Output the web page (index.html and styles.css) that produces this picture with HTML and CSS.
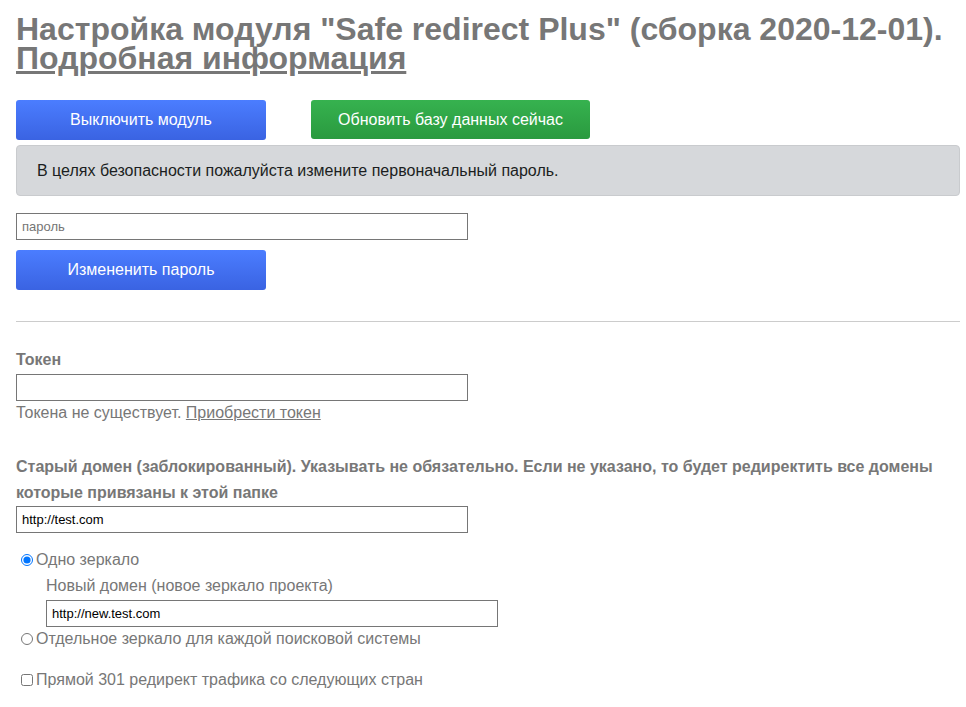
FILE: index.html
```html
<!DOCTYPE html>
<html lang="ru">
<head>
<meta charset="utf-8">
<title>Safe redirect Plus</title>
<link rel="stylesheet" href="styles.css">
</head>
<body>
<div class="page">
  <h1 class="title">Настройка модуля "Safe redirect Plus" (сборка 2020-12-01). <a href="#" class="title-link">Подробная информация</a></h1>

  <div class="actions">
    <button class="btn btn-blue">Выключить модуль</button>
    <button class="btn btn-green">Обновить базу данных сейчас</button>
  </div>

  <div class="alert">В целях безопасности пожалуйста измените первоначальный пароль.</div>

  <div class="pass-block">
    <input class="field field-pass" type="text" placeholder="пароль">
    <button class="btn btn-blue">Измененить пароль</button>
  </div>

  <hr class="divider">

  <div class="group">
    <label class="label">Токен</label>
    <input class="field" type="text">
    <div class="hint">Токена не существует. <a href="#" class="hint-link">Приобрести токен</a></div>
  </div>

  <div class="group group-domain">
    <label class="label label-wide">Старый домен (заблокированный). Указывать не обязательно. Если не указано, то будет редиректить все домены которые привязаны к этой папке</label>
    <input class="field field-url" type="text" value="http://test.com">
  </div>

  <div class="options">
    <label class="option"><input type="radio" name="mirror" checked> Одно зеркало</label>
    <div class="sub">
      <div class="sub-label">Новый домен (новое зеркало проекта)</div>
      <input class="field field-url" type="text" value="http://new.test.com">
    </div>
    <label class="option"><input type="radio" name="mirror"> Отдельное зеркало для каждой поисковой системы</label>
    <label class="option option-check"><input type="checkbox"> Прямой 301 редирект трафика со следующих стран</label>
  </div>
</div>
</body>
</html>
```

FILE: styles.css
```css
* { box-sizing: border-box; }
html, body { margin: 0; padding: 0; background: #fff; }
body {
  font-family: "Liberation Sans", Arial, sans-serif;
  color: #777;
  font-size: 16px;
}
.page { padding: 15px 6px 20px 16px; }

.title {
  margin: 0;
  font-size: 32px;
  line-height: 29px;
  font-weight: bold;
  color: #777;
}
.title-link { color: #777; text-decoration: underline; }

.actions {
  display: flex;
  gap: 45px;
  margin-top: 27px;
}
.btn {
  font-family: "Liberation Sans", Arial, sans-serif;
  font-size: 16px;
  color: #fff;
  border: 0;
  border-radius: 3px;
  height: 40px;
  padding: 0 16px;
  cursor: pointer;
}
.btn-blue {
  width: 250px;
  background: linear-gradient(#4b7dff, #3a63e2);
}
.btn-green {
  width: 279px;
  height: 39px;
  background: linear-gradient(#36b24f, #2a9a3f);
}

.alert {
  margin-top: 5px;
  background: #d6d8db;
  border: 1px solid #c9cbce;
  border-radius: 4px;
  padding: 16px 20px 15px;
  color: #1b1e21;
  font-size: 16px;
  line-height: 18px;
}

.pass-block {
  display: flex;
  flex-direction: column;
  align-items: flex-start;
  gap: 10px;
  margin-top: 17px;
}
.field {
  display: block;
  width: 452px;
  height: 27px;
  border: 1px solid #767676;
  font-family: "Liberation Sans", Arial, sans-serif;
  font-size: 13px;
  padding: 1px 5px;
  color: #000;
  background: #fff;
}
.field-pass::placeholder { color: #757575; font-size: 13px; }

.divider {
  margin: 31px 0 0;
  border: 0;
  border-top: 1px solid #ccc;
}

.group { margin-top: 28px; }
.label {
  display: block;
  font-weight: bold;
  font-size: 16px;
  line-height: 20px;
  margin-bottom: 4px;
}
.label-wide { line-height: 26px; margin-bottom: 0; }
.hint { font-size: 16px; line-height: 20px; margin-top: 2px; }
.hint-link { color: #777; }

.group-domain { margin-top: 31px; }

.options { margin-top: 17px; }
.option {
  display: flex;
  align-items: center;
  font-size: 16px;
  line-height: 20px;
  margin-left: 4px;
}
.option input { margin: 0 3px 0 1px; width: 12px; height: 12px; }
.sub { padding-left: 30px; margin-top: 6px; margin-bottom: 2px; }
.sub-label { font-size: 16px; line-height: 20px; margin-bottom: 4px; }
.option-check { margin-top: 21px; }
```
